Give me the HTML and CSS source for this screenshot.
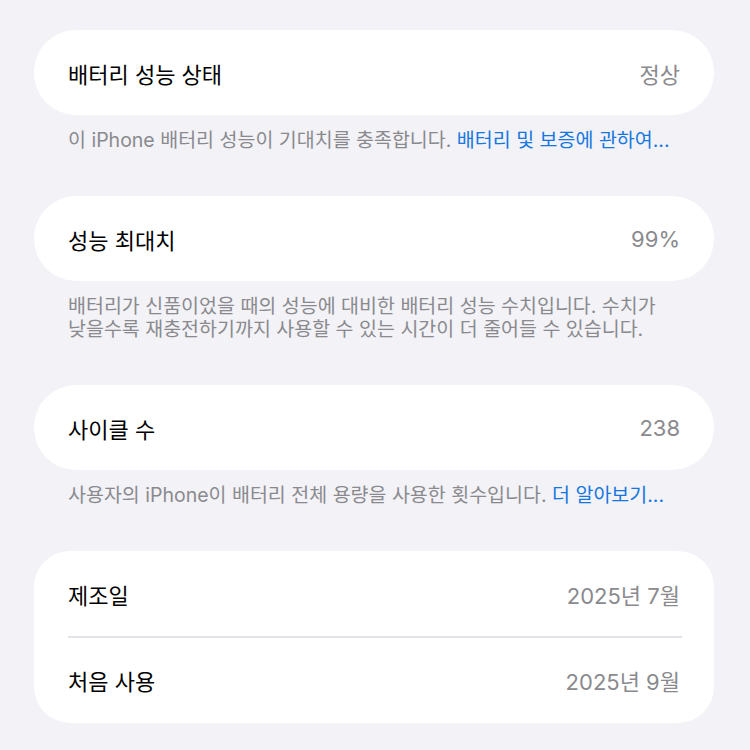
FILE: index.html
```html
<!DOCTYPE html>
<html lang="ko">
<head>
    <meta charset="UTF-8">
    <meta name="viewport" content="width=device-width, initial-scale=1.0">

    <link rel="stylesheet" href="styles.css">

    <title>배터리 성능 상태</title>
</head>
<body>

    <div class="page">

        <div class="group">
            <div class="card">
                <div class="row">
                    <div class="label">배터리 성능 상태</div>
                    <div class="value">정상</div>
                </div>
            </div>
            <div class="footer">이 iPhone 배터리 성능이 기대치를 충족합니다. <span class="link">배터리 및 보증에 관하여...</span></div>
        </div>

        <div class="group">
            <div class="card">
                <div class="row">
                    <div class="label">성능 최대치</div>
                    <div class="value">99%</div>
                </div>
            </div>
            <div class="footer">배터리가 신품이었을 때의 성능에 대비한 배터리 성능 수치입니다. 수치가 낮을수록 재충전하기까지 사용할 수 있는 시간이 더 줄어들 수 있습니다.</div>
        </div>

        <div class="group">
            <div class="card">
                <div class="row">
                    <div class="label">사이클 수</div>
                    <div class="value">238</div>
                </div>
            </div>
            <div class="footer">사용자의 iPhone이 배터리 전체 용량을 사용한 횟수입니다. <span class="link">더 알아보기...</span></div>
        </div>

        <div class="group">
            <div class="card card-list">
                <div class="row">
                    <div class="label">제조일</div>
                    <div class="value">2025년 7월</div>
                </div>
                <div class="divider"></div>
                <div class="row">
                    <div class="label">처음 사용</div>
                    <div class="value">2025년 9월</div>
                </div>
            </div>
        </div>

    </div>

</body>
</html>
```

FILE: styles.css
```css
body {
    margin: 0;
    background-color: #f2f2f7;
    font-family: Inter, "Noto Sans CJK KR", sans-serif;
}

.page {
    padding: 30px 36px 0 34px;
}

.group {
    margin-bottom: 44px;
}

.card {
    background-color: #ffffff;
    border-radius: 42px;
}

.card-list {
    border-radius: 36px;
}

.row {
    display: flex;
    justify-content: space-between;
    align-items: center;
    height: 85px;
    padding: 0 34px;
}

.label {
    font-size: 22px;
    color: #000000;
}

.value {
    font-size: 22px;
    color: #8a8a8e;
}

.divider {
    height: 1.5px;
    margin: 0 32px 0 34px;
    background-color: #e3e3e7;
}

.footer {
    padding: 14px 34px 0 34px;
    font-size: 19.5px;
    line-height: 23px;
    color: #8a8a8e;
    word-break: keep-all;
}

.link {
    color: #1677e0;
}
```
